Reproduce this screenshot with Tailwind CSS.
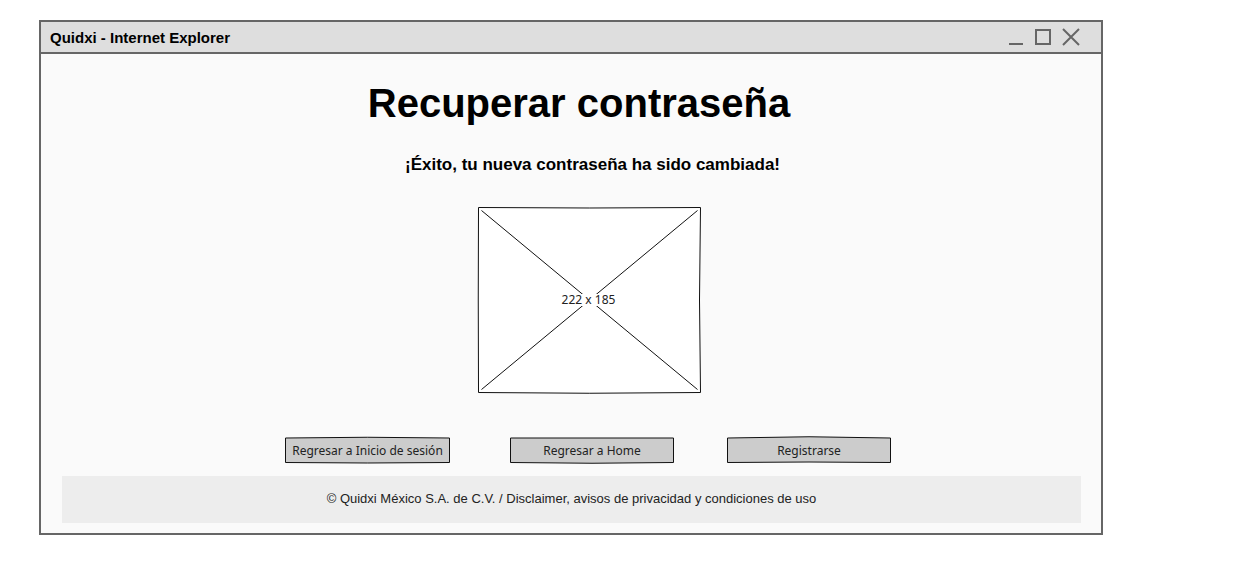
<!DOCTYPE html>
<html lang="es">
<head>
<meta charset="utf-8">
<meta name="viewport" content="width=device-width, initial-scale=1">
<title>Quidxi</title>
<script src="https://cdn.jsdelivr.net/npm/@tailwindcss/browser@4"></script>
</head>
<body class="bg-white pt-5 pr-[148px] pb-7 pl-[39px] font-['Liberation_Sans',Arial,sans-serif] text-black">
<div class="border-2 border-[#666] bg-[#fafafa]">
  <header class="flex h-8 items-center justify-between border-b-2 border-[#666] bg-[#dedede] pr-[21px] pl-[9px]">
    <span class="pt-0.5 text-[15px] leading-5 font-bold">Quidxi - Internet Explorer</span>
    <div class="flex items-center gap-2.5 text-[#666]">
      <button type="button" aria-label="Minimizar"><svg class="block h-[18px] w-4" viewBox="0 0 16 18" fill="none" stroke="currentColor" stroke-width="2"><path d="M1 16H15"/></svg></button>
      <button type="button" aria-label="Maximizar"><svg class="block h-[18px] w-[18px]" viewBox="0 0 18 18" fill="none" stroke="currentColor" stroke-width="2"><path d="M2 2H16V16H2Z"/></svg></button>
      <button type="button" aria-label="Cerrar"><svg class="block h-[18px] w-[18px]" viewBox="0 0 18 18" fill="none" stroke="currentColor" stroke-width="2"><path d="M1 1L17 17M17 1L1 17"/></svg></button>
    </div>
  </header>

  <main class="flex flex-col items-center pt-[25px]">
    <h1 class="pl-4 text-[40px] leading-[48px] font-bold">Recuperar contraseña</h1>
    <p class="mt-[26px] pl-[43px] text-[17px] leading-6 font-bold">¡Éxito, tu nueva contraseña ha sido cambiada!</p>

    <div class="mt-[29px] pl-[35px]">
      <div class="grid place-items-center font-['Noto_Sans',sans-serif]">
        <svg class="col-start-1 row-start-1 block h-[188px] w-[224px]" viewBox="0 0 224 188" fill="none" stroke="#111" aria-hidden="true">
          <path fill="#fff" d="M1.5 1.5Q112 2.5 223.5 1.5Q221.5 94 223.5 186.5Q112 188 1.5 186.5Q1 94 1.5 1.5Z"/>
          <path d="M4.5 4.5L220.5 183.5M220.5 4.5L4.5 183.5"/>
        </svg>
        <span class="col-start-1 row-start-1 bg-white text-xs leading-3 text-[#222]">222 x 185</span>
      </div>
    </div>

    <div class="mt-[42px] flex pl-[34px] font-['Noto_Sans',sans-serif] text-xs leading-4 text-[#222]">
      <button type="button" class="mr-[60px] grid w-[165px] place-items-center">
        <svg class="col-start-1 row-start-1 block h-7 w-full" viewBox="0 0 165 28" fill="#ccc" stroke="#111" aria-hidden="true"><path d="M.5 2Q82 .5 164.5 2V26.500Q82 27.500 .5 26.500Z"/></svg>
        <span class="col-start-1 row-start-1 pt-0.5">Regresar a Inicio de sesión</span>
      </button>
      <button type="button" class="mr-[53px] grid w-[164px] place-items-center">
        <svg class="col-start-1 row-start-1 block h-7 w-full" viewBox="0 0 164 28" fill="#ccc" stroke="#111" aria-hidden="true"><path d="M.5 2H163.5V26.5Q82 28 .5 26.5Z"/></svg>
        <span class="col-start-1 row-start-1 pt-0.5">Regresar a Home</span>
      </button>
      <button type="button" class="grid w-[164px] place-items-center">
        <svg class="col-start-1 row-start-1 block h-7 w-full" viewBox="0 0 164 28" fill="#ccc" stroke="#111" aria-hidden="true"><path d="M.5 2Q82 -.5 163.5 2V26.5Q82 25.5 .5 26.5Z"/></svg>
        <span class="col-start-1 row-start-1 pt-0.5">Registrarse</span>
      </button>
    </div>
  </main>

  <footer class="mr-5 mt-3 mb-2.5 ml-[21px] bg-[#ededed] pt-[13px] pb-3.5 text-center text-[13px] leading-5 text-[#222]">© Quidxi México S.A. de C.V. / <a href="#">Disclaimer, avisos de privacidad y condiciones de uso</a></footer>
</div>
</body>
</html>
